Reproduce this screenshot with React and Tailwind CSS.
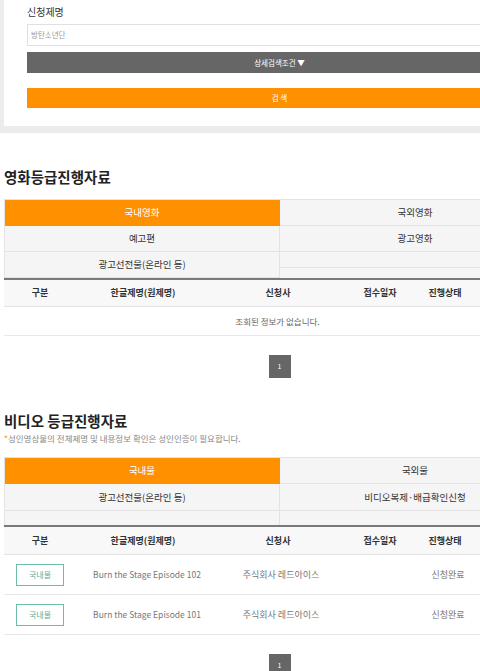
import React from "react";

const font = { fontFamily: '"Noto Sans CJK KR", "Noto Sans", sans-serif' };

function Tab({ children, active, h = "h-[26px]", extra = "" }) {
  return (
    <div
      className={`${h} flex items-center justify-center text-[9.5px] border-b border-r border-[#e3e3e3] ${
        active ? "bg-[#ff9000] text-white border-[#ff9000]" : "bg-[#f5f5f5] text-[#333]"
      } ${extra}`}
    >
      {children}
    </div>
  );
}

const cols = ["w-[72px]", "w-[134px]", "w-[136px]", "w-[68px]", "w-[62px]", "flex-1"];
const heads = ["구분", "한글제명(원제명)", "신청사", "접수일자", "진행상태", ""];

function Header({ h = "h-[30px]" }) {
  return (
    <div className={`flex ${h} bg-[#f8f8f8] border-t-2 border-[#7a7a7a] border-b border-b-[#e2e2e2]`}>
      {heads.map((t, i) => (
        <div
          key={i}
          className={`${cols[i]} flex items-center justify-center text-[9px] font-bold text-[#333]`}
        >
          {t}
        </div>
      ))}
    </div>
  );
}

function Pager() {
  return (
    <div className="flex justify-center">
      <div className="w-[22px] h-[23px] bg-[#666] text-white text-[7px] flex items-center justify-center ml-[4px]">
        1
      </div>
    </div>
  );
}

function Row({ title }) {
  return (
    <div className="flex h-[40px] border-b border-[#e8e8e8] items-center text-[8.5px] text-[#777]">
      <div className={`${cols[0]} flex justify-center`}>
        <div className="w-[48px] h-[22px] border border-[#6dbda9] text-[#5aae99] flex items-center justify-center text-[8px]">
          국내물
        </div>
      </div>
      <div className={`${cols[1]} text-center pl-[8px]`}>{title}</div>
      <div className={`${cols[2]} text-center pl-[6px] text-[9px]`}>주식회사 레드아이스</div>
      <div className={`${cols[3]}`}></div>
      <div className={`${cols[4]} text-center pl-[6px] text-[9px]`}>신청완료</div>
      <div className={cols[5]}></div>
    </div>
  );
}

export default function App() {
  return (
    <div className="w-[480px] h-[671px] overflow-hidden bg-white" style={font}>
      <div className="w-[555px]">
        <div className="bg-[#ececec] pl-[4px] pb-[7px]">
          <div className="bg-white px-[23px] pt-[5px] pb-[18px]">
            <div className="text-[10px] leading-[14px] text-[#333]">신청제명</div>
            <div className="mt-[5px] h-[22px] border border-[#e0e0e0] flex items-center pl-[3px] text-[7.5px] text-[#999]">
              방탄소년단
            </div>
            <div className="mt-[6px] h-[21px] bg-[#666] flex items-center justify-center text-[7.5px] text-white">
              상세검색조건&nbsp;▼
            </div>
            <div className="mt-[15px] h-[20px] bg-[#ff9000] flex items-center justify-center text-[7.5px] text-white">
              검 색
            </div>
          </div>
        </div>

        <div className="pl-[4px] w-[551px]">
          <h2 className="mt-[35px] text-[14.5px] leading-[18px] font-bold text-[#222]">영화등급진행자료</h2>
          <div className="mt-[13px] grid grid-cols-[275px_1fr] border-l border-t border-[#e3e3e3]">
            <div>
              <Tab active>국내영화</Tab>
              <Tab>예고편</Tab>
              <Tab>광고선전물(온라인 등)</Tab>
            </div>
            <div>
              <Tab>국외영화</Tab>
              <Tab>광고영화</Tab>
              <Tab h="h-[16px]"></Tab>
              <Tab h="h-[10px]" extra="border-b-0"></Tab>
            </div>
          </div>
          <Header h="h-[29px]" />
          <div className="flex h-[29px] items-center justify-center border-b border-[#e8e8e8] text-[8.5px] text-[#666]">
            조회된 정보가 없습니다.
          </div>
          <div className="mt-[19px]">
            <Pager />
          </div>

          <h2 className="mt-[34px] text-[14.5px] leading-[18px] font-bold text-[#222]">비디오 등급진행자료</h2>
          <div className="mt-[2px] text-[8.5px] leading-[12px] text-[#888]">
            <span className="text-[#ff9000]">*</span>성인영상물의 전체제명 및 내용정보 확인은 성인인증이 필요합니다.
          </div>
          <div className="mt-[13px] grid grid-cols-[275px_1fr] border-l border-t border-[#e3e3e3]">
            <div>
              <Tab active>국내물</Tab>
              <Tab h="h-[27px]">광고선전물(온라인 등)</Tab>
              <Tab h="h-[14px]" extra="border-b-0"></Tab>
            </div>
            <div>
              <Tab>국외물</Tab>
              <Tab h="h-[27px]">비디오복제·배급확인신청</Tab>
              <Tab h="h-[14px]" extra="border-b-0"></Tab>
            </div>
          </div>
          <Header />
          <Row title="Burn the Stage Episode 102" />
          <Row title="Burn the Stage Episode 101" />
          <div className="mt-[19px]">
            <Pager />
          </div>
        </div>
      </div>
    </div>
  );
}
